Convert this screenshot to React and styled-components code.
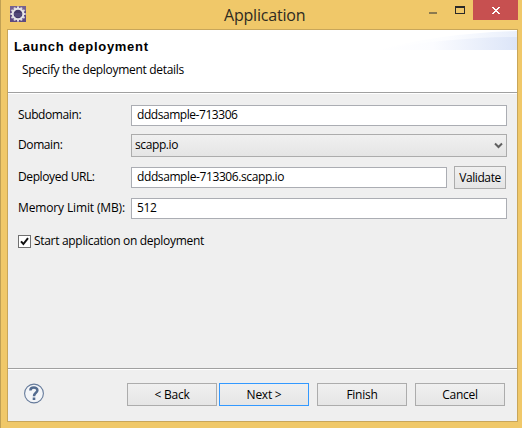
import React from "react";
import styled, { createGlobalStyle } from "styled-components";

const GlobalStyle = createGlobalStyle`
  * { box-sizing: border-box; }
  body { margin: 0; overflow: hidden; }
`;

const Window = styled.div`
  width: 522px;
  height: 428px;
  display: flex;
  flex-direction: column;
  background: #f0c869;
  border-left: 1px solid #c0a054;
  padding: 0 4px 6px 6px;
  font: 12px/16px "Open Sans", "Noto Sans", sans-serif;
  color: #000;
`;

const TitleBar = styled.header`
  height: 29px;
  flex: none;
  display: flex;
  align-items: flex-start;
`;

const AppIcon = styled.svg`
  margin: 6px 0 0 3px;
  flex: none;
`;

const Title = styled.h1`
  margin: 3px 0 0 198px;
  width: 200px;
  font-size: 16px;
  line-height: 24px;
  font-weight: 400;
  letter-spacing: -0.2px;
  color: #2f2b22;
  white-space: nowrap;
`;

const WindowControls = styled.svg`
  margin-left: auto;
  flex: none;
`;

const Dialog = styled.main`
  flex: 1;
  display: flex;
  flex-direction: column;
  width: 511px;
  background: #efefef;
  border: 1px solid #c8a65a;
`;

const Banner = styled.section`
  height: 64px;
  flex: none;
  display: flex;
  justify-content: space-between;
  background: #fff;
  border-bottom: 1px solid #fff;
  box-shadow: inset 0 -1px #a0a0a0;
`;

const BannerText = styled.div`
  padding: 9px 0 0 6px;
`;

const Heading = styled.h2`
  margin: 0;
  font: bold 13px/16px "Liberation Sans", Arial, sans-serif;
  letter-spacing: 0.7px;
  white-space: nowrap;
`;

const Text = styled.span`
  display: inline-block;
  white-space: nowrap;
  letter-spacing: ${(p) => p.$spacing || "-0.4px"};
`;

const Description = styled.p`
  margin: 7px 0 0 8px;
`;

const Form = styled.section`
  flex: 1;
  padding: 10px 10px 0;
`;

const Row = styled.div`
  display: flex;
  align-items: center;
  height: 23px;
  margin-bottom: ${(p) => p.$gap}px;
`;

const Label = styled.label`
  width: 113px;
  padding-bottom: 1px;
  flex: none;
`;

const Field = styled.div`
  width: ${(p) => p.$width || 376}px;
  height: 21px;
  padding: 1px 5px;
  border: 1px solid #abadb3;
  background: #fff;
`;

const Select = styled.div`
  width: 376px;
  height: 23px;
  padding: 0 3px 1px;
  display: flex;
  align-items: center;
  justify-content: space-between;
  border: 1px solid #acacac;
  background: linear-gradient(#f0f0f0, #e5e5e5);
`;

const Button = styled.button`
  width: ${(p) => p.$width || 90}px;
  height: 23px;
  padding: 0;
  margin-left: ${(p) => p.$gap || 0}px;
  flex: none;
  border: 1px solid ${(p) => (p.$primary ? "#3399ff" : "#acacac")};
  background: linear-gradient(#f0f0f0, #e5e5e5);
  font: inherit;
  color: inherit;
`;

const CheckRow = styled.div`
  display: flex;
  align-items: flex-start;
  gap: 3px;
  height: 17px;
`;

const CheckBox = styled.svg`
  margin-top: 2px;
  flex: none;
`;

const Footer = styled.footer`
  height: 53px;
  flex: none;
  display: flex;
  align-items: flex-start;
  padding: 14px 12px 0 15px;
  border-top: 1px solid #a0a0a0;
  box-shadow: inset 0 1px #fff;
`;

const HelpIcon = styled.svg`
  margin-right: 83px;
  flex: none;
`;

const TEETH = Array.from({ length: 12 }, (_, i) => i * 30);

export default function App() {
  return (
    <>
      <GlobalStyle />
      <Window>
        <TitleBar>
          <AppIcon width="16" height="16" viewBox="0 0 16 16">
            <rect width="16" height="16" fill="#5d4a80" />
            <path d="M0 0h16v5H0z" fill="#75618f" />
            {TEETH.map((a) => (
              <rect key={a} x="7" y="0.4" width="2" height="3" fill="#dedbe0" transform={`rotate(${a} 8 8)`} />
            ))}
            <circle cx="8" cy="8" r="5.3" fill="#443a68" stroke="#e6e4e6" strokeWidth="1.9" />
            <path d="M4 8h8M5 10h6" stroke="#62598a" strokeWidth="1" />
          </AppIcon>
          <Title>Application</Title>
          <WindowControls width="89" height="20" viewBox="0 0 89 20" shapeRendering="crispEdges">
            <rect x="0" y="12" width="8" height="2" fill="#8b7a4f" />
            <path d="M26 6h10v8H26zM27 8v5h8V8z" fill="#2b2a28" fillRule="evenodd" />
            <rect x="44" y="0" width="45" height="20" fill="#c75050" />
            <path d="M63 7h2v1h1v1h2V8h1V7h2v1h-1v1h-1v1h-1v1h1v1h1v1h1v1h-2v-1h-1v-1h-2v1h-1v1h-2v-1h1v-1h1v-1h1v-1h-1V9h-1V8h-1z" fill="#fff" />
          </WindowControls>
        </TitleBar>
        <Dialog>
          <Banner>
            <BannerText>
              <Heading>Launch deployment</Heading>
              <Description>
                <Text $spacing="-0.31px">Specify the deployment details</Text>
              </Description>
            </BannerText>
            <svg width="140" height="20" viewBox="0 0 140 20">
              <defs>
                <linearGradient id="sweep">
                  <stop offset="0" stopColor="#fff" />
                  <stop offset="0.4" stopColor="#fbfcff" />
                  <stop offset="1" stopColor="#dce5f8" />
                </linearGradient>
                <linearGradient id="glow">
                  <stop offset="0" stopColor="#fff" />
                  <stop offset="0.5" stopColor="#fcfdff" />
                  <stop offset="1" stopColor="#e9effb" />
                </linearGradient>
              </defs>
              <path d="M0 20Q65 3 140 1V20z" fill="url(#glow)" />
              <path d="M0 20Q75 7 140 7V20z" fill="url(#sweep)" />
            </svg>
          </Banner>
          <Form>
            <Row $gap={7}>
              <Label><Text>Subdomain:</Text></Label>
              <Field><Text $spacing="-0.45px">dddsample-713306</Text></Field>
            </Row>
            <Row $gap={9}>
              <Label><Text>Domain:</Text></Label>
              <Select>
                <Text>scapp.io</Text>
                <svg width="9" height="7" viewBox="0 0 9 7">
                  <path d="M1 1.5L4.5 5L8 1.5" fill="none" stroke="#606060" strokeWidth="2" />
                </svg>
              </Select>
            </Row>
            <Row $gap={8}>
              <Label><Text>Deployed URL:</Text></Label>
              <Field $width={316}><Text>dddsample-713306.scapp.io</Text></Field>
              <Button $width={52} $gap={7}><Text>Validate</Text></Button>
            </Row>
            <Row $gap={13}>
              <Label><Text $spacing="-0.14px">Memory Limit (MB):</Text></Label>
              <Field><Text>512</Text></Field>
            </Row>
            <CheckRow>
              <CheckBox width="13" height="13" viewBox="0 0 13 13">
                <rect x="0.5" y="0.5" width="12" height="12" fill="#fff" stroke="#707070" />
                <path d="M3 6.3L5.4 9L10 3.2" fill="none" stroke="#111" strokeWidth="2" />
              </CheckBox>
              <Text $spacing="-0.31px">Start application on deployment</Text>
            </CheckRow>
          </Form>
          <Footer>
            <HelpIcon width="21" height="21" viewBox="0 0 21 21">
              <circle cx="11" cy="10.5" r="9.4" fill="#f3f5f8" stroke="#667b9b" strokeWidth="1.1" />
              <path d="M7.4 7.4C7.4 3.6 14.4 3.6 14.4 7.3C14.4 9.9 11 9.8 11 13.2" fill="none" stroke="#536b8f" strokeWidth="2.5" />
              <rect x="9.7" y="14.5" width="2.6" height="2.5" fill="#536b8f" />
            </HelpIcon>
            <Button><Text $spacing="-0.25px">&lt; Back</Text></Button>
            <Button $gap={2} $primary><Text $spacing="-0.25px">Next &gt;</Text></Button>
            <Button $gap={8}><Text $spacing="-0.25px">Finish</Text></Button>
            <Button $gap={8}><Text $spacing="-0.25px">Cancel</Text></Button>
          </Footer>
        </Dialog>
      </Window>
    </>
  );
}
